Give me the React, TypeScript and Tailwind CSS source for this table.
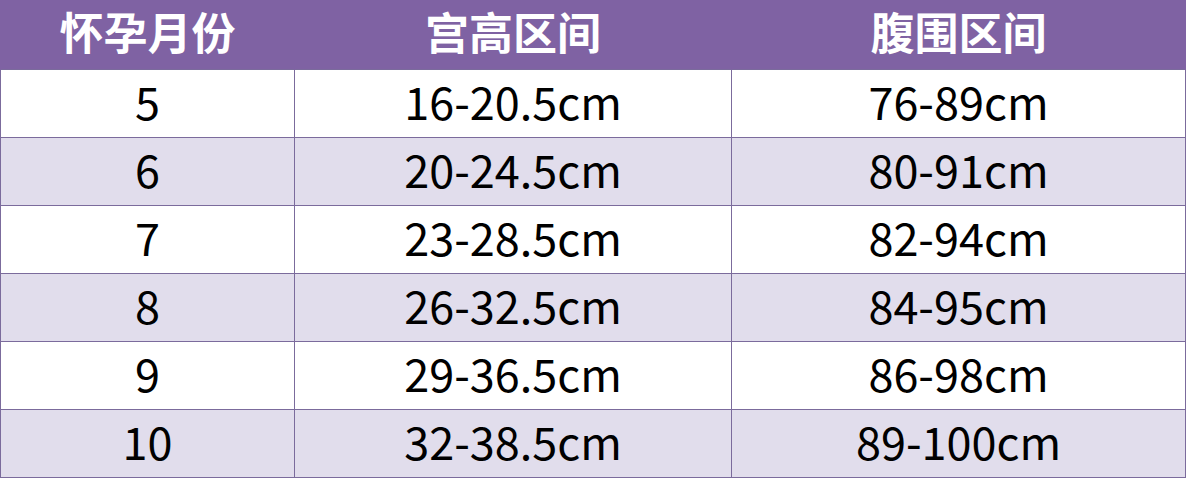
import React from "react";

const rows = [
  ["5", "16-20.5cm", "76-89cm"],
  ["6", "20-24.5cm", "80-91cm"],
  ["7", "23-28.5cm", "82-94cm"],
  ["8", "26-32.5cm", "84-95cm"],
  ["9", "29-36.5cm", "86-98cm"],
  ["10", "32-38.5cm", "89-100cm"],
];

export default function App() {
  return (
    <div className="w-[1186px] h-[479px] bg-white" style={{ fontFamily: '"Noto Sans CJK SC", "Noto Sans", sans-serif' }}>
      <table className="w-[1185px] border-collapse table-fixed">
        <colgroup>
          <col className="w-[294px]" />
          <col className="w-[437px]" />
          <col className="w-[454px]" />
        </colgroup>
        <thead>
          <tr className="h-[69px] bg-[#7f62a3] text-white">
            <th className="text-[44px] font-bold leading-none p-0 pb-[6px] border-x border-[#7f62a3]">怀孕月份</th>
            <th className="text-[44px] font-bold leading-none p-0 pb-[6px]">宫高区间</th>
            <th className="text-[44px] font-bold leading-none p-0 pb-[6px] border-x border-[#7f62a3]">腹围区间</th>
          </tr>
        </thead>
        <tbody>
          {rows.map((r, i) => (
            <tr key={i} className={`h-[68px] ${i % 2 === 1 ? "bg-[#e1ddec]" : "bg-white"}`}>
              {r.map((c, j) => (
                <td key={j} className="border border-[#7b6b9c] text-center text-[45px] font-normal leading-none p-0 pb-[6px] text-black">
                  {c}
                </td>
              ))}
            </tr>
          ))}
        </tbody>
      </table>
    </div>
  );
}
